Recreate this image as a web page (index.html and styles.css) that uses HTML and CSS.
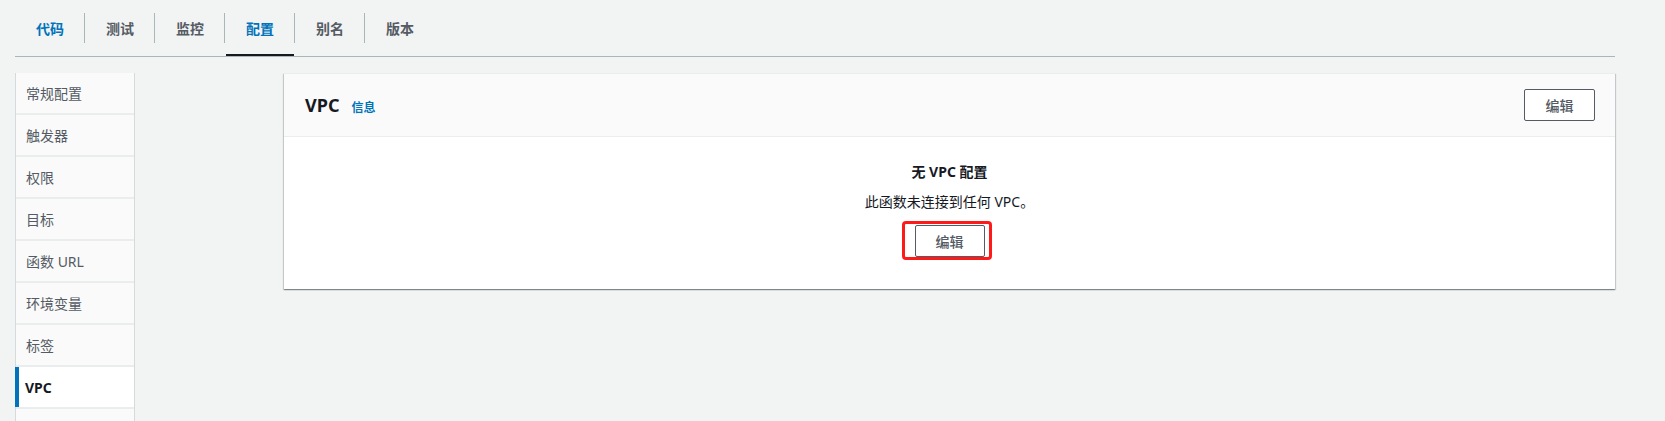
FILE: index.html
```html
<!DOCTYPE html>
<html lang="zh-CN">
<head>
<meta charset="utf-8">
<title>配置 - VPC</title>
<link rel="stylesheet" href="styles.css">
</head>
<body>
<div class="page">
  <nav class="tabs">
    <div class="tab tab-blue">代码</div>
    <div class="tab">测试</div>
    <div class="tab">监控</div>
    <div class="tab tab-blue tab-active">配置</div>
    <div class="tab">别名</div>
    <div class="tab">版本</div>
  </nav>
  <div class="layout">
    <ul class="side">
      <li class="side-item">常规配置</li>
      <li class="side-item">触发器</li>
      <li class="side-item">权限</li>
      <li class="side-item">目标</li>
      <li class="side-item">函数 URL</li>
      <li class="side-item">环境变量</li>
      <li class="side-item">标签</li>
      <li class="side-item side-active">VPC</li>
      <li class="side-item"></li>
    </ul>
    <section class="panel">
      <header class="panel-head">
        <div class="panel-title">
          <h2 class="title">VPC</h2>
          <a class="info">信息</a>
        </div>
        <button class="btn">编辑</button>
      </header>
      <div class="panel-body">
        <div class="empty-title">无 VPC 配置</div>
        <div class="empty-text">此函数未连接到任何 VPC。</div>
        <div class="btn-wrap">
          <button class="btn">编辑</button>
          <div class="mark"></div>
        </div>
      </div>
    </section>
  </div>
</div>
</body>
</html>
```
FILE: styles.css
```css
* { box-sizing: border-box; }
html, body {
  margin: 0;
  padding: 0;
  background: #f2f3f3;
  font-family: "Noto Sans", "Noto Sans CJK SC", sans-serif;
  color: #16191f;
  font-size: 14px;
  overflow: hidden;
}
.page {
  padding: 0 50px 0 15px;
}
.tabs {
  display: flex;
  height: 57px;
  border-bottom: 1px solid #aab7b8;
}
.tab {
  position: relative;
  width: 70px;
  display: flex;
  align-items: center;
  justify-content: center;
  font-weight: 700;
  color: #545b64;
  font-size: 14px;
  height: 56px;
}
.tab + .tab::before {
  content: "";
  position: absolute;
  left: -1px;
  top: 13px;
  height: 30px;
  border-left: 1px solid #aab7b8;
}
.tab-blue { color: #0073bb; }
.tab-active::after {
  content: "";
  position: absolute;
  left: 1px;
  right: 1px;
  bottom: 0;
  height: 2px;
  background: #16191f;
}
.layout {
  display: grid;
  grid-template-columns: 120px 1fr;
  column-gap: 149px;
  margin-top: 16px;
  align-items: start;
}
.side {
  list-style: none;
  margin: 0;
  padding: 0;
  border-left: 1px solid #d5dbdb;
  border-right: 1px solid #d5dbdb;
  background: #eaeded;
  display: flex;
  flex-direction: column;
  gap: 2px;
}
.side-item {
  height: 40px;
  display: flex;
  align-items: center;
  padding-left: 10px;
  background: #fafafa;
  color: #545b64;
  font-size: 14px;
  white-space: nowrap;
  overflow: hidden;
}
.side-active {
  background: #ffffff;
  color: #16191f;
  font-weight: 700;
  border-left: 4px solid #0073bb;
  padding-left: 6px;
  margin-left: -1px;
}
.panel {
  background: #ffffff;
  border-top: 1px solid #eaeded;
  box-shadow: 0 1px 1px 0 rgba(0,28,36,0.3), 1px 1px 1px 0 rgba(0,28,36,0.15), -1px 1px 1px 0 rgba(0,28,36,0.15);
}
.panel-head {
  display: flex;
  align-items: center;
  justify-content: space-between;
  padding: 15px 20px 15px 21px;
  background: #fafafa;
  border-bottom: 1px solid #eaeded;
}
.panel-title {
  display: flex;
  align-items: baseline;
  gap: 12px;
}
.title {
  margin: 0;
  font-size: 18px;
  font-weight: 700;
  line-height: 24px;
  color: #16191f;
}
.info {
  font-size: 12px;
  font-weight: 700;
  color: #0073bb;
}
.btn {
  width: 71px;
  height: 32px;
  background: #ffffff;
  border: 1px solid #545b64;
  border-radius: 2px;
  color: #545b64;
  font-family: "Noto Sans", "Noto Sans CJK SC", sans-serif;
  font-size: 14px;
  font-weight: 500;
  padding: 0;
}
.panel-body {
  display: flex;
  flex-direction: column;
  align-items: center;
  padding: 25px 0 32px;
}
.empty-title {
  font-weight: 700;
  line-height: 20px;
  color: #16191f;
}
.empty-text {
  margin-top: 10px;
  line-height: 20px;
  color: #16191f;
}
.btn-wrap {
  position: relative;
  margin-top: 13px;
  display: flex;
}
.btn-wrap .btn { width: 70px; }
.mark {
  position: absolute;
  left: -13px;
  top: -4px;
  width: 90px;
  height: 39px;
  border: 3px solid #ff1a1a;
  border-radius: 4px;
}
```
